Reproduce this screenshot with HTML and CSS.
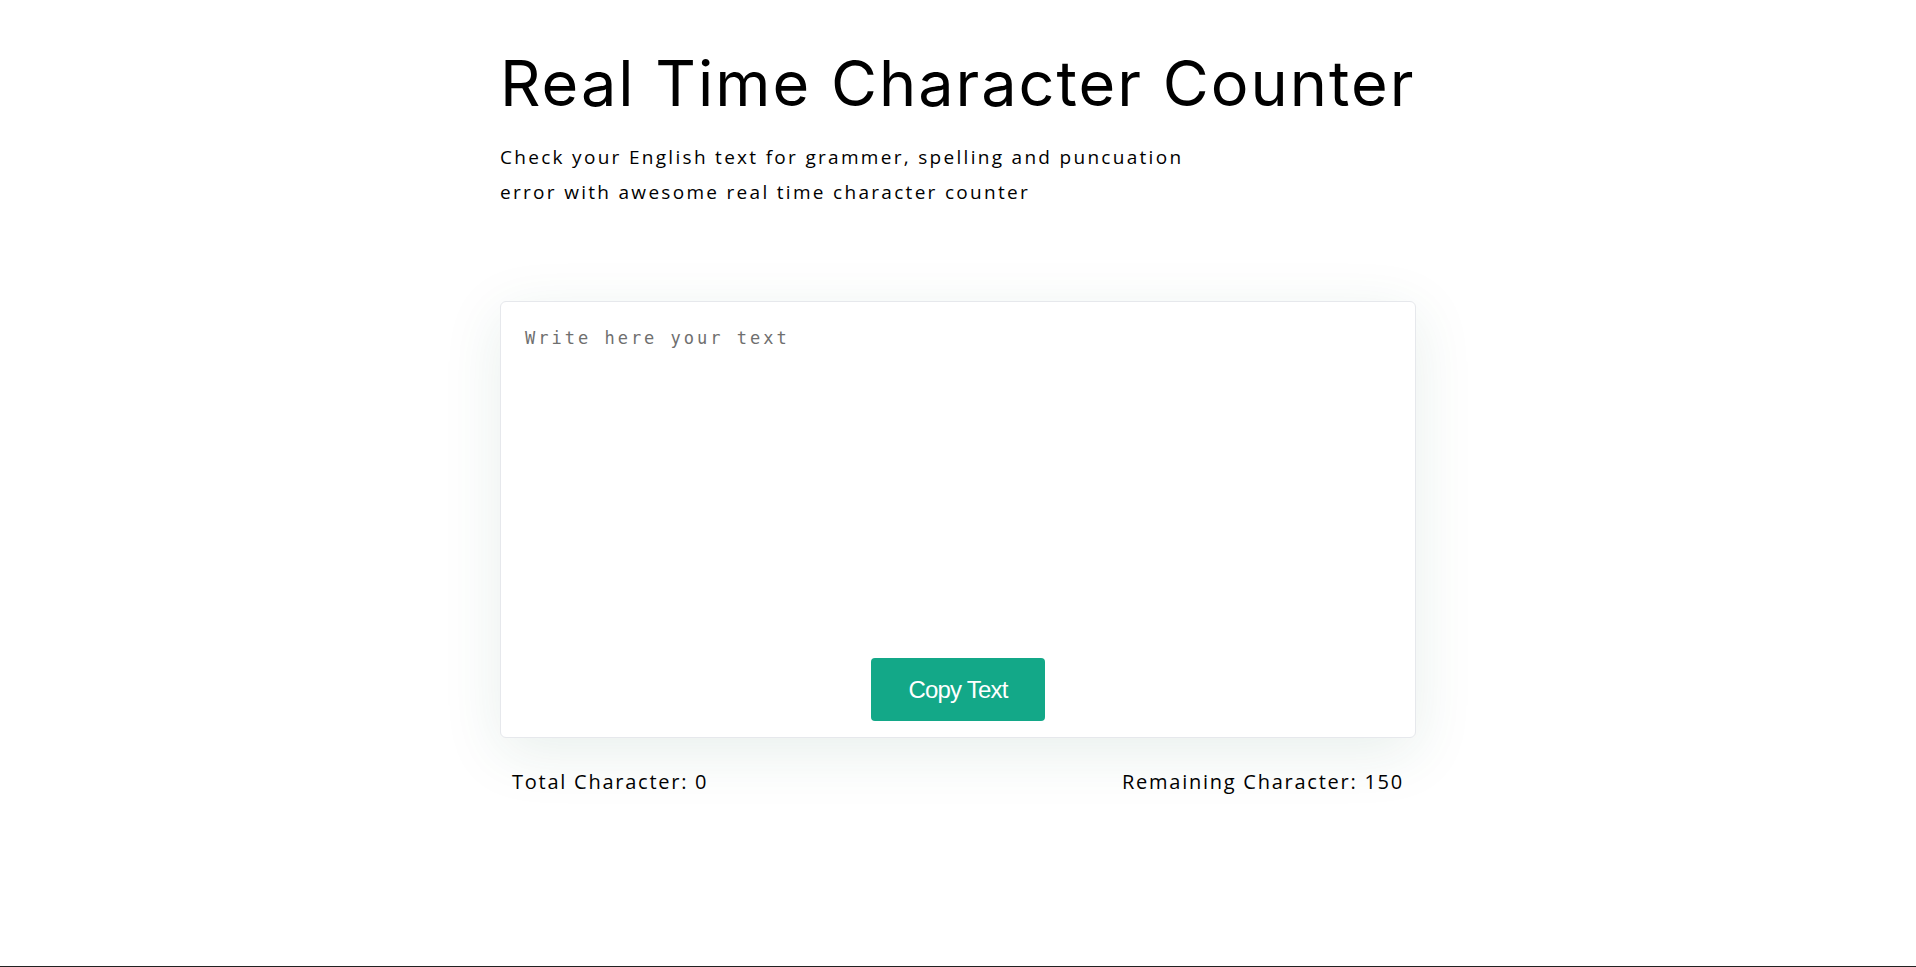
FILE: index.html
```html
<!DOCTYPE html>
<html lang="en">
<head>
<meta charset="utf-8">
<title>Real Time Character Counter</title>
<link rel="stylesheet" href="styles.css">
</head>
<body>
<main class="page">
  <div class="wrap">
    <h1 class="title">Real Time Character Counter</h1>
    <p class="subtitle">Check your English text for grammer, spelling and puncuation<br>error with awesome real time character counter</p>
    <div class="card">
      <textarea class="input" placeholder="Write here your text"></textarea>
      <button class="copy-btn" type="button">Copy Text</button>
    </div>
    <div class="counts">
      <span class="count">Total Character: 0</span>
      <span class="count">Remaining Character: 150</span>
    </div>
  </div>
</main>
<div class="bottom-line"></div>
</body>
</html>
```
FILE: styles.css
```css
* { box-sizing: border-box; }
html, body { margin: 0; padding: 0; }
body {
  background: #ffffff;
  min-height: 100vh;
  display: flex;
  flex-direction: column;
  font-family: "Open Sans", "Noto Sans", sans-serif;
  color: #000;
}
.page { flex: 1; }
.wrap {
  width: 916px;
  margin: 0 auto;
  padding-top: 45px;
}
.title {
  margin: 0;
  font-family: "Inter", "Noto Sans", sans-serif;
  font-weight: 400;
  font-size: 63px;
  line-height: 76px;
  letter-spacing: 2px;
  white-space: nowrap;
  color: #000;
}
.subtitle {
  margin: 19px 0 0;
  font-size: 19px;
  line-height: 35px;
  letter-spacing: 2.3px;
  color: #000;
}
.card {
  margin-top: 91px;
  border: 1px solid #e6e8ec;
  border-radius: 6px;
  background: #fff;
  box-shadow: 0 14px 60px rgba(30, 100, 70, 0.10);
  display: flex;
  flex-direction: column;
  align-items: center;
  padding-bottom: 16px;
}
.input {
  display: block;
  width: 100%;
  height: 356px;
  border: none;
  outline: none;
  resize: none;
  padding: 26px 24px 22px;
  background: transparent;
  font-family: "DejaVu Sans Mono", monospace;
  font-size: 17px;
  letter-spacing: 3px;
  color: #333;
  border-radius: 6px;
}
.input::placeholder { color: #6f6f6f; }
.copy-btn {
  width: 174px;
  height: 63px;
  border: none;
  border-radius: 4px;
  background: #13a888;
  color: #fff;
  font-family: "Liberation Sans", Arial, sans-serif;
  font-size: 24px;
  letter-spacing: -0.8px;
  cursor: pointer;
}
.counts {
  display: flex;
  justify-content: space-between;
  padding: 0 12px;
  margin-top: 31px;
}
.count {
  font-size: 20px;
  line-height: 26px;
  letter-spacing: 1.75px;
}
.bottom-line {
  height: 1px;
  background: #222;
  flex: none;
}
```
